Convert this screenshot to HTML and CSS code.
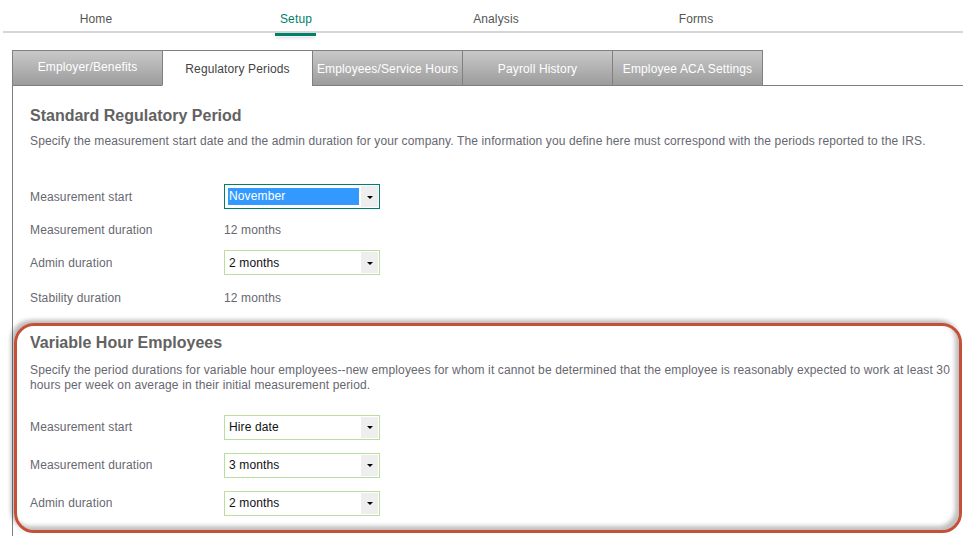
FILE: index.html
```html
<!DOCTYPE html>
<html lang="en">
<head>
    <meta charset="UTF-8">
    <meta name="viewport" content="width=device-width, initial-scale=1.0">
    <title>Regulatory Periods</title>
    <link rel="stylesheet" href="styles.css">
</head>
<body>

    <div class="topbar">
        <ul class="nav">
            <li class="nav-item">Home</li>
            <li class="nav-item active">Setup</li>
            <li class="nav-item">Analysis</li>
            <li class="nav-item">Forms</li>
        </ul>
    </div>

    <div class="tabs">
        <div class="tab tab-first">Employer/Benefits</div>
        <div class="tab active">Regulatory Periods</div>
        <div class="tab">Employees/Service Hours</div>
        <div class="tab">Payroll History</div>
        <div class="tab tab-last">Employee ACA Settings</div>
        <div class="tab-fill"></div>
    </div>

    <div class="panel">
        <div class="section">
            <h2>Standard Regulatory Period</h2>
            <p class="desc">Specify the measurement start date and the admin duration for your company. The information you define here must correspond with the periods reported to the IRS.</p>

            <div class="rows">
                <div class="row">
                    <span class="label">Measurement start</span>
                    <div class="select focused">
                        <span class="value"><span class="hl">November</span></span>
                        <span class="arrow"></span>
                    </div>
                </div>
                <div class="row">
                    <span class="label">Measurement duration</span>
                    <span class="static">12 months</span>
                </div>
                <div class="row">
                    <span class="label">Admin duration</span>
                    <div class="select">
                        <span class="value">2 months</span>
                        <span class="arrow"></span>
                    </div>
                </div>
                <div class="row row-last">
                    <span class="label">Stability duration</span>
                    <span class="static">12 months</span>
                </div>
            </div>
        </div>

        <div class="callout">
            <h2>Variable Hour Employees</h2>
            <p class="desc">Specify the period durations for variable hour employees--new employees for whom it cannot be determined that the employee is reasonably expected to work at least 30 hours per week on average in their initial measurement period.</p>

            <div class="rows rows-wide">
                <div class="row">
                    <span class="label">Measurement start</span>
                    <div class="select">
                        <span class="value">Hire date</span>
                        <span class="arrow"></span>
                    </div>
                </div>
                <div class="row">
                    <span class="label">Measurement duration</span>
                    <div class="select">
                        <span class="value">3 months</span>
                        <span class="arrow"></span>
                    </div>
                </div>
                <div class="row">
                    <span class="label">Admin duration</span>
                    <div class="select">
                        <span class="value">2 months</span>
                        <span class="arrow"></span>
                    </div>
                </div>
            </div>
        </div>
    </div>

</body>
</html>
```

FILE: styles.css
```css
/* Page */
body {
    margin: 0;
    font-family: "Liberation Sans", Arial, sans-serif;
    font-size: 12px;
    letter-spacing: 0.13px;
    color: #666;
    background: #fff;
    overflow: hidden;
}

/* Top navigation */
.topbar {
    margin-left: 3px;
    border-bottom: 2px solid #d6d6d6;
}

.nav {
    display: flex;
    list-style: none;
    margin: 0 0 0 -7px;
    padding: 0;
}

.nav-item {
    position: relative;
    width: 200px;
    height: 31px;
    padding-top: 12px;
    box-sizing: border-box;
    text-align: center;
    line-height: 14px;
    font-size: 12px;
    color: #555;
}

.nav-item.active {
    color: #00806b;
}

.nav-item.active::after {
    content: "";
    position: absolute;
    left: 79px;
    bottom: -5px;
    width: 41px;
    height: 3px;
    background: #00806b;
    box-shadow: 0 3px 3px -1px rgba(0, 0, 0, 0.28);
}

/* Tabs */
.tabs {
    display: flex;
    margin: 17px 0 0 12px;
    height: 36px;
}

.tab {
    width: 150px;
    box-sizing: border-box;
    border: 1px solid #808080;
    border-right: none;
    background: linear-gradient(#c9c9c9, #9c9c9c);
    color: #fff;
    display: flex;
    align-items: center;
    justify-content: center;
    padding-top: 1px;
    white-space: nowrap;
}

.tab-first {
    padding-top: 0;
    padding-bottom: 3px;
}

.tab-last {
    width: 151px;
    border-right: 1px solid #808080;
}

.tab.active {
    background: #fff;
    color: #444;
    border-bottom-color: #fff;
    padding-top: 2px;
}

.tab-fill {
    flex: 1;
    border-bottom: 1px solid #808080;
}

/* Content panel */
.panel {
    margin-left: 12px;
    border-left: 1px solid #808080;
    min-height: 460px;
}

.section {
    padding: 20px 0 0 17px;
}

h2 {
    margin: 0;
    font-size: 16px;
    line-height: 20px;
    font-weight: bold;
    letter-spacing: 0;
    color: #626262;
}

.desc {
    margin: 8px 0 0;
    line-height: 15px;
    color: #676770;
}

.rows {
    margin-top: 31px;
}

.row {
    display: flex;
    align-items: center;
    height: 33px;
}

.row-last {
    margin-top: 2px;
}

.label {
    width: 194px;
    flex-shrink: 0;
    color: #676770;
}

.static {
    color: #676770;
}

/* Dropdowns */
.select {
    display: flex;
    align-items: stretch;
    width: 156px;
    height: 25px;
    box-sizing: border-box;
    border: 1px solid #b9de9e;
    padding: 1px;
    background: #fff;
}

.select.focused {
    border-color: #00806b;
}

.value {
    flex: 1;
    display: flex;
    align-items: center;
    padding-left: 3px;
    color: #111;
}

.hl {
    display: block;
    width: 130px;
    margin-left: -1px;
    padding-left: 1px;
    line-height: 17px;
    background: #3399ff;
    color: #fff;
}

.arrow {
    width: 17px;
    margin-left: 2px;
    background: #eee;
    display: flex;
    align-items: center;
    justify-content: center;
}

.arrow::before {
    content: "";
    border-left: 3px solid transparent;
    border-right: 3px solid transparent;
    border-top: 3px solid #000;
    margin-top: 1px;
}

/* Highlighted block */
.callout {
    margin: 9px 1px 0 1px;
    padding: 7px 4px 8px 13px;
    border: 3px solid #c4503a;
    border-radius: 20px;
    box-shadow: -3px -3px 4px rgba(0, 0, 0, 0.28), inset -4px -4px 4px rgba(0, 0, 0, 0.25);
}

.callout .desc {
    margin-top: 10px;
}

.rows-wide {
    margin-top: 15px;
}

.rows-wide .row {
    height: 38px;
}
```
